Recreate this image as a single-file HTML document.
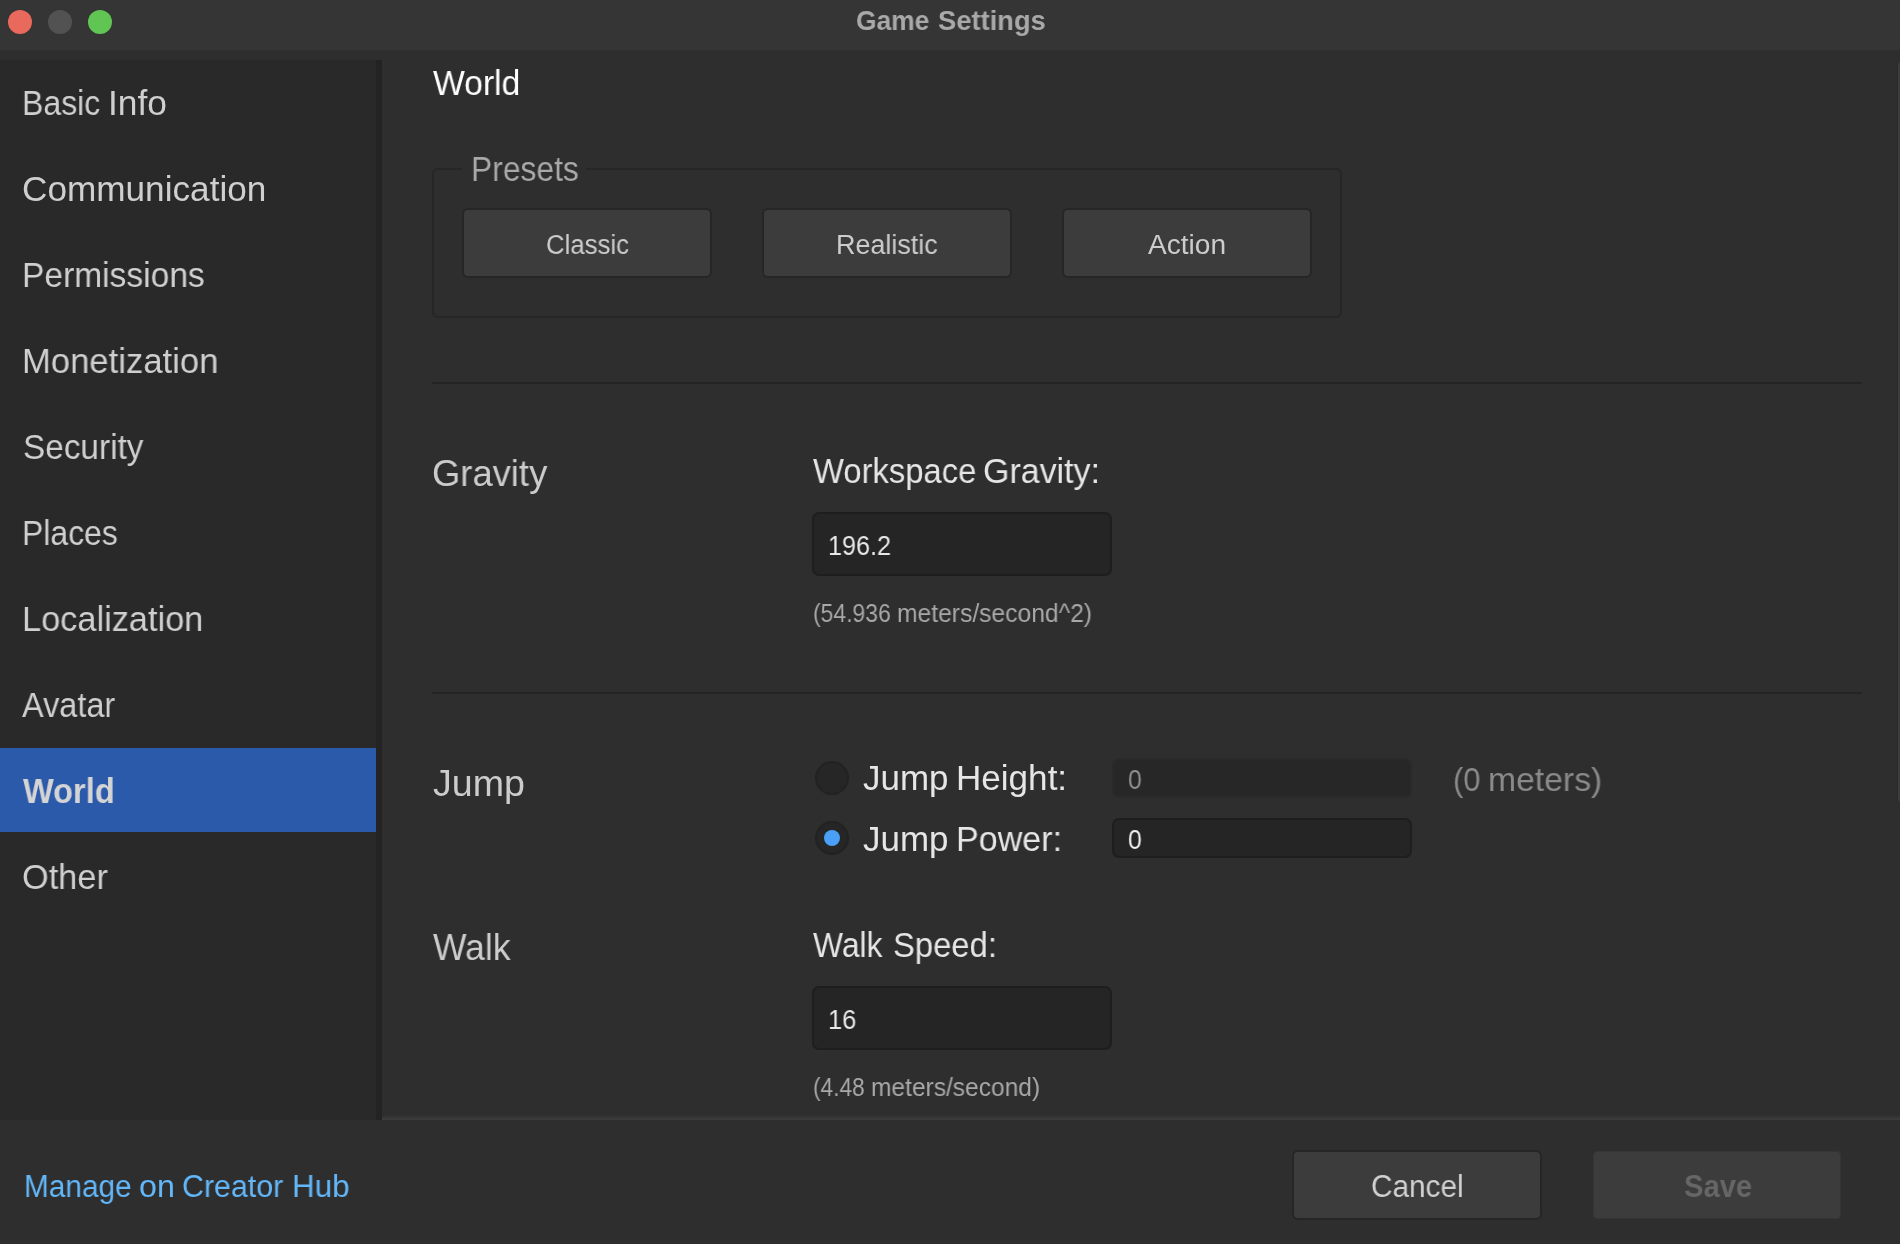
<!DOCTYPE html>
<html lang="en">
<head>
<meta charset="utf-8">
<title>Game Settings</title>
<style>
html,body{margin:0;padding:0;background:#2e2e2e}
body{width:1900px;height:1244px;background:#2e2e2e;overflow:hidden;position:relative;font-family:"Liberation Sans",sans-serif}
ul{list-style:none;margin:0;padding:0}
h1{margin:0;font-size:inherit;font-weight:normal}
.t{position:absolute;white-space:nowrap;line-height:1;transform-origin:0 0;will-change:transform}
.bx{position:absolute;box-sizing:border-box}
.titlebar-bg{left:0;top:0;width:1900px;height:50px;background:#353535}
.dot{top:10px;width:24px;height:24px;border-radius:50%}
.side-bg{left:0;top:60px;width:376px;height:1060px;background:#292929}
.side-strip{left:376px;top:60px;width:6px;height:1060px;background:#232323}
.side-sel{left:0;top:748px;width:376px;height:84px;background:#2b5aab}
.fieldset{left:432px;top:168px;width:910px;height:150px;border:2px solid #262626;border-radius:6px}
.legend-gap{left:462px;top:166px;width:124px;height:6px;background:#2e2e2e}
.btn{width:250px;height:70px;background:#3c3c3c;border:2px solid #262626;border-radius:6px}
.btn-dis{background:#3c3c3c;border:1px solid #353535;border-radius:4px;width:248px;height:68px}
.sep{left:432px;width:1430px;height:2px;background:#242424}
.input{background:#252525;border:2px solid #1e1e1e;border-radius:7px}
.input-dis{background:#272727;border-color:#2a2a2a}
.radio{width:34px;height:34px;border-radius:50%;background:#262626;border:2px solid #222222}
.radio-dot{width:16px;height:16px;border-radius:50%;background:#4aa0f6}
.scroll-thumb{left:1898px;top:62px;width:8px;height:740px;border-radius:3px;background:#3c3c3c;box-shadow:-1px 0 0 #2b2b2b}
.foot-line{left:382px;top:1115px;width:1518px;height:5px;background:linear-gradient(to bottom,rgba(62,62,62,0),#3e3e3e)}
</style>
</head>
<body>
<header class="titlebar">
  <div class="bx titlebar-bg"></div>
  <div class="bx dot" style="left:8px;background:#e9695d"></div>
  <div class="bx dot" style="left:48px;background:#525252"></div>
  <div class="bx dot" style="left:88px;background:#61c554"></div>
  <span class="t" style="left:856.14px;top:7.30px;font-size:27.6px;color:#a9a9a9;transform:scaleX(0.9569);font-weight:bold">Game</span> <span class="t" style="left:937.60px;top:7.30px;font-size:27.6px;color:#a9a9a9;transform:scaleX(0.9898);font-weight:bold">Settings</span>
</header>
<nav class="sidebar">
  <div class="bx side-bg"></div>
  <div class="bx side-strip"></div>
  <div class="bx side-sel"></div>
  <ul>
    <li><span class="t" style="left:21.86px;top:85.60px;font-size:34.9px;color:#cfcfcf;transform:scaleX(0.9183)">Basic</span> <span class="t" style="left:107.96px;top:85.60px;font-size:34.9px;color:#cfcfcf;transform:scaleX(1.0132)">Info</span></li>
    <li><span class="t" style="left:22.39px;top:171.60px;font-size:34.9px;color:#cfcfcf;transform:scaleX(1.0080)">Communication</span></li>
    <li><span class="t" style="left:22.08px;top:257.60px;font-size:34.9px;color:#cfcfcf;transform:scaleX(0.9618)">Permissions</span></li>
    <li><span class="t" style="left:22.01px;top:343.60px;font-size:34.9px;color:#cfcfcf;transform:scaleX(0.9927)">Monetization</span></li>
    <li><span class="t" style="left:23.04px;top:429.60px;font-size:34.9px;color:#cfcfcf;transform:scaleX(0.9555)">Security</span></li>
    <li><span class="t" style="left:22.17px;top:515.60px;font-size:34.9px;color:#cfcfcf;transform:scaleX(0.9152)">Places</span></li>
    <li><span class="t" style="left:22.03px;top:601.60px;font-size:34.9px;color:#cfcfcf;transform:scaleX(0.9842)">Localization</span></li>
    <li><span class="t" style="left:22.40px;top:687.60px;font-size:34.9px;color:#cfcfcf;transform:scaleX(0.9305)">Avatar</span></li>
    <li><span class="t" style="left:22.60px;top:773.80px;font-size:34.9px;color:#d4d4d4;transform:scaleX(0.9331);font-weight:bold">World</span></li>
    <li><span class="t" style="left:22.22px;top:859.80px;font-size:34.9px;color:#cfcfcf;transform:scaleX(0.9834)">Other</span></li>
  </ul>
</nav>
<main class="content">
  <div class="bx scroll-thumb"></div>
  <h1><span class="t" style="left:433.00px;top:66.00px;font-size:34.9px;color:#ffffff;transform:scaleX(0.9655)">World</span></h1>
  <section class="presets">
    <div class="bx fieldset"></div>
    <div class="bx legend-gap"></div>
    <span class="t" style="left:470.58px;top:152.00px;font-size:34.9px;color:#a8a8a8;transform:scaleX(0.9116)">Presets</span>
    <div class="bx btn" style="left:462px;top:208px"></div><span class="t" style="left:546.05px;top:232.00px;font-size:27px;color:#cccccc;transform:scaleX(0.9543)">Classic</span>
    <div class="bx btn" style="left:762px;top:208px"></div><span class="t" style="left:836.41px;top:232.00px;font-size:27px;color:#cccccc;transform:scaleX(0.9967)">Realistic</span>
    <div class="bx btn" style="left:1062px;top:208px"></div><span class="t" style="left:1148.00px;top:232.00px;font-size:27px;color:#cccccc;transform:scaleX(1.0402)">Action</span>
  </section>
  <div class="bx sep" style="top:382px"></div>
  <section class="gravity">
    <span class="t" style="left:431.92px;top:454.70px;font-size:37.1px;color:#cccccc;transform:scaleX(0.9813)">Gravity</span>
    <span class="t" style="left:813.00px;top:454.00px;font-size:34.9px;color:#e6e6e6;transform:scaleX(0.9393)">Workspace</span> <span class="t" style="left:983.03px;top:454.00px;font-size:34.9px;color:#e6e6e6;transform:scaleX(0.9734)">Gravity:</span>
    <div class="bx input" style="left:812px;top:512px;width:300px;height:64px"></div><span class="t" style="left:827.79px;top:532.00px;font-size:27.9px;color:#e8e8e8;transform:scaleX(0.9036)">196.2</span>
    <span class="t" style="left:812.68px;top:601.00px;font-size:25px;color:#a8a8a8;transform:scaleX(0.9169)">(54.936</span> <span class="t" style="left:896.61px;top:601.00px;font-size:25px;color:#a8a8a8;transform:scaleX(0.9857)">meters/second^2)</span>
  </section>
  <div class="bx sep" style="top:692px"></div>
  <section class="jump">
    <span class="t" style="left:433.00px;top:764.80px;font-size:37.1px;color:#cccccc;transform:scaleX(1.0150)">Jump</span>
    <div class="bx radio" style="left:815px;top:761px"></div>
    <span class="t" style="left:863.00px;top:761.00px;font-size:34.9px;color:#e6e6e6;transform:scaleX(1.0010)">Jump</span> <span class="t" style="left:955.99px;top:761.00px;font-size:34.9px;color:#e6e6e6;transform:scaleX(1.0051)">Height:</span>
    <div class="bx input input-dis" style="left:1112px;top:758px;width:300px;height:40px"></div><span class="t" style="left:1127.91px;top:766.00px;font-size:27.9px;color:#909090;transform:scaleX(0.8857)">0</span>
    <span class="t" style="left:1452.67px;top:763.00px;font-size:33.9px;color:#8a8a8a;transform:scaleX(0.9126)">(0</span> <span class="t" style="left:1488.01px;top:763.00px;font-size:33.9px;color:#8a8a8a;transform:scaleX(0.9948)">meters)</span>
    <div class="bx radio" style="left:815px;top:821px"></div>
    <div class="bx radio-dot" style="left:824px;top:830px"></div>
    <span class="t" style="left:863.00px;top:821.60px;font-size:34.9px;color:#e6e6e6;transform:scaleX(1.0010)">Jump</span> <span class="t" style="left:956.05px;top:821.60px;font-size:34.9px;color:#e6e6e6;transform:scaleX(0.9760)">Power:</span>
    <div class="bx input" style="left:1112px;top:818px;width:300px;height:40px"></div><span class="t" style="left:1127.91px;top:826.00px;font-size:27.9px;color:#f0f0f0;transform:scaleX(0.8857)">0</span>
  </section>
  <section class="walk">
    <span class="t" style="left:433.00px;top:928.60px;font-size:37.1px;color:#cccccc;transform:scaleX(0.9573)">Walk</span>
    <span class="t" style="left:813.00px;top:928.40px;font-size:34.9px;color:#e6e6e6;transform:scaleX(0.9115)">Walk</span> <span class="t" style="left:893.06px;top:928.40px;font-size:34.9px;color:#e6e6e6;transform:scaleX(0.9393)">Speed:</span>
    <div class="bx input" style="left:812px;top:986px;width:300px;height:64px"></div><span class="t" style="left:827.78px;top:1006.00px;font-size:27.9px;color:#e8e8e8;transform:scaleX(0.9119)">16</span>
    <span class="t" style="left:812.69px;top:1075.00px;font-size:25px;color:#a8a8a8;transform:scaleX(0.9078)">(4.48</span> <span class="t" style="left:870.62px;top:1075.00px;font-size:25px;color:#a8a8a8;transform:scaleX(0.9814)">meters/second)</span>
  </section>
</main>
<footer class="footer">
  <div class="bx foot-line"></div>
  <span class="t" style="left:24.14px;top:1170.00px;font-size:32.1px;color:#63b7f9;transform:scaleX(0.9285)">Manage</span> <span class="t" style="left:139.00px;top:1170.00px;font-size:32.1px;color:#63b7f9;transform:scaleX(1.0049)">on</span> <span class="t" style="left:182.05px;top:1170.00px;font-size:32.1px;color:#63b7f9;transform:scaleX(0.9465)">Creator</span> <span class="t" style="left:291.64px;top:1170.00px;font-size:32.1px;color:#63b7f9;transform:scaleX(0.9785)">Hub</span>
  <div class="bx btn" style="left:1292px;top:1150px"></div><span class="t" style="left:1371.37px;top:1170.20px;font-size:32.1px;color:#d0d0d0;transform:scaleX(0.9274)">Cancel</span>
  <div class="bx btn btn-dis" style="left:1593px;top:1151px"></div><span class="t" style="left:1684.00px;top:1170.00px;font-size:32.1px;color:#666666;transform:scaleX(0.9099);font-weight:bold">Save</span>
</footer>
</body>
</html>
